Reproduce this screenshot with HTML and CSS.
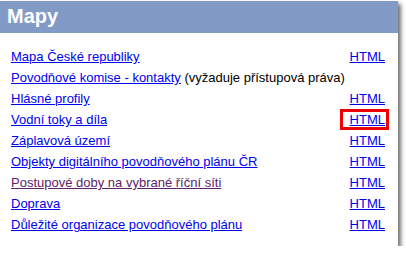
FILE: index.html
```html
<!DOCTYPE html>
<html lang="cs">
<head>
    <meta charset="UTF-8">
    <title>Mapy</title>
    <link rel="stylesheet" href="styles.css">
</head>
<body>
    <div class="panel">
        <h2 class="panel-title">Mapy</h2>
        <table class="maps">
            <tr>
                <td><a href="#">Mapa České republiky</a></td>
                <td class="fmt"><a href="#">HTML</a></td>
            </tr>
            <tr>
                <td colspan="2"><a href="#">Povodňové komise - kontakty</a> (vyžaduje přístupová práva)</td>
            </tr>
            <tr>
                <td><a href="#">Hlásné profily</a></td>
                <td class="fmt"><a href="#">HTML</a></td>
            </tr>
            <tr>
                <td><a href="#">Vodní toky a díla</a></td>
                <td class="fmt"><a href="#" class="marked">HTML</a></td>
            </tr>
            <tr>
                <td><a href="#">Záplavová území</a></td>
                <td class="fmt"><a href="#">HTML</a></td>
            </tr>
            <tr>
                <td><a href="#">Objekty digitálního povodňového plánu ČR</a></td>
                <td class="fmt"><a href="#">HTML</a></td>
            </tr>
            <tr>
                <td><a href="#" class="visited">Postupové doby na vybrané říční síti</a></td>
                <td class="fmt"><a href="#">HTML</a></td>
            </tr>
            <tr>
                <td><a href="#">Doprava</a></td>
                <td class="fmt"><a href="#">HTML</a></td>
            </tr>
            <tr>
                <td><a href="#">Důležité organizace povodňového plánu</a></td>
                <td class="fmt"><a href="#">HTML</a></td>
            </tr>
        </table>
    </div>
</body>
</html>
```

FILE: styles.css
```css
body {
    margin: 0;
    background: #fff;
    font-family: "Liberation Sans", Arial, sans-serif;
}

.panel {
    width: 398px;
    height: 245px;
    margin: 1px 0 0 0;
    background: #fff;
    box-shadow: 3px 3px 4px rgba(0, 0, 0, 0.55);
}

.panel-title {
    margin: 0;
    height: 32px;
    line-height: 30px;
    padding-left: 7px;
    background: #829bc6;
    color: #fff;
    font-size: 20px;
    font-weight: bold;
}

.maps {
    border-collapse: collapse;
    margin: 13px 0 0 9px;
    width: 378px;
    font-size: 13px;
}

.maps td {
    padding: 0 2px;
    height: 21px;
    color: #000;
}

.maps a {
    color: #0000ee;
}

.maps a.visited {
    color: #5e2368;
}

.maps .fmt {
    text-align: right;
}

/* red frame drawn round one of the links */
.maps a.marked {
    outline: 3px solid #ee0000;
    padding: 0 1px 0 7px;
    margin-right: -1px;
}
```
